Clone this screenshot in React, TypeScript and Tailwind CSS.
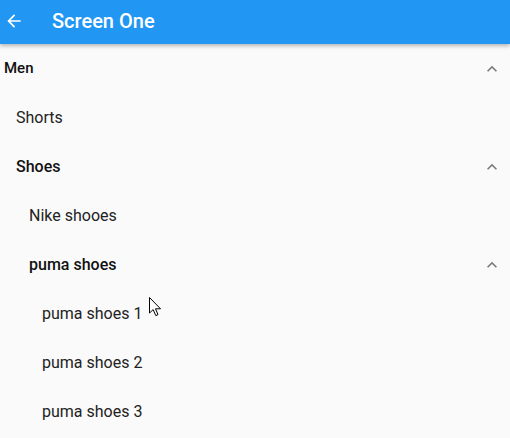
import React from "react";

const font = { fontFamily: "Roboto, 'Liberation Sans', sans-serif" };

function Chevron() {
  return (
    <svg width="20" height="20" viewBox="0 0 24 24" className="shrink-0">
      <path d="M12 8l-6 6 1.41 1.41L12 10.83l4.59 4.58L18 14z" fill="#7a7a7a" />
    </svg>
  );
}

type Row = { label: string; pad: string; header?: boolean; size?: string };

const rows: Row[] = [
  { label: "Men", pad: "pl-[4px]", header: true, size: "text-[15px]" },
  { label: "Shorts", pad: "pl-[16px]" },
  { label: "Shoes", pad: "pl-[16px]", header: true },
  { label: "Nike shooes", pad: "pl-[29px]" },
  { label: "puma shoes", pad: "pl-[29px]", header: true },
  { label: "puma shoes 1", pad: "pl-[42px]" },
  { label: "puma shoes 2", pad: "pl-[42px]" },
  { label: "puma shoes 3", pad: "pl-[42px]" },
];

export default function App() {
  return (
    <div className="relative w-[510px] h-[438px] overflow-hidden bg-[#fafafa] flex flex-col" style={font}>
      <div className="relative z-10 h-[44px] shrink-0 bg-[#2196f3] shadow-[0_2px_4px_rgba(0,0,0,0.28)] flex items-center pb-[3px] pl-[4px]">
        <svg width="20" height="20" viewBox="0 0 24 24" className="shrink-0">
          <path d="M20 11H7.83l5.59-5.59L12 4l-8 8 8 8 1.41-1.41L7.83 13H20v-2z" fill="#ffffff" />
        </svg>
        <span className="ml-[28px] text-white text-[20px] font-medium leading-[24px]">Screen One</span>
      </div>
      <div className="flex flex-col">
        {rows.map((r) => (
          <div key={r.label} className={`h-[49px] flex items-center justify-between ${r.pad} pr-[8px]`}>
            <span
              className={`${r.size ?? "text-[16px]"} leading-[49px] ${
                r.header ? "font-medium text-[#111111]" : "font-normal text-[#222222]"
              }`}
            >
              {r.label}
            </span>
            {r.header && <Chevron />}
          </div>
        ))}
      </div>
      <svg
        className="absolute left-[149px] top-[297px]"
        width="13"
        height="20"
        viewBox="0 0 13 20"
      >
        <path d="M0.5 0.5 L0.5 16 L4.2 12.6 L6.8 18.6 L9 17.6 L6.5 11.8 L11.5 11.8 Z" fill="#ffffff" stroke="#000000" strokeWidth="1" strokeLinejoin="miter" />
      </svg>
    </div>
  );
}
